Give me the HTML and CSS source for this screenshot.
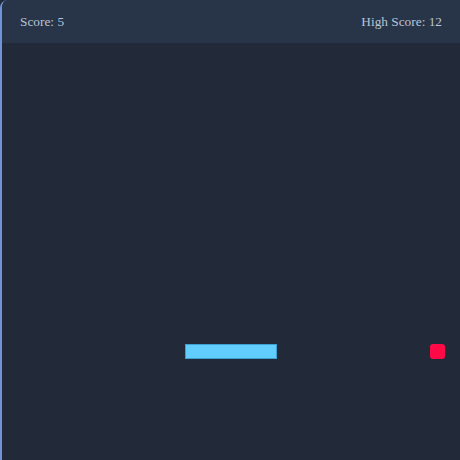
FILE: index.html
```html
<!DOCTYPE html>
<html>
<head>
<meta charset="utf-8">
<link rel="stylesheet" href="styles.css">
</head>
<body>
<div class="game">
  <div class="header">
    <span class="score">Score: 5</span>
    <span class="score">High Score: 12</span>
  </div>
  <div class="board">
    <div class="snake" style="left:183px;top:301px;width:92px;"></div>
    <div class="food" style="left:428px;top:301px;"></div>
  </div>
</div>
</body>
</html>
```
FILE: styles.css
```css
html, body {
  margin: 0;
  padding: 0;
  background: #222a3a;
}
.game {
  width: 460px;
  height: 460px;
  box-sizing: border-box;
  border-left: 2px solid #6f95d8;
  border-top-left-radius: 8px;
  background: #222a3a;
  display: flex;
  flex-direction: column;
  overflow: hidden;
}
.header {
  height: 43px;
  flex: none;
  background: #283548;
  display: flex;
  justify-content: space-between;
  align-items: center;
  padding: 0 18px 0 18px;
  font-family: "Liberation Serif", serif;
  font-size: 13.33px;
  color: #b8c3d6;
}
.board {
  position: relative;
  flex: 1;
}
.snake {
  position: absolute;
  height: 15px;
  box-sizing: border-box;
  background: #61cdfd;
  border: 1px solid #3f9fd0;
}
.food {
  position: absolute;
  width: 15px;
  height: 15px;
  border-radius: 3px;
  background: #ff0a47;
}
```
